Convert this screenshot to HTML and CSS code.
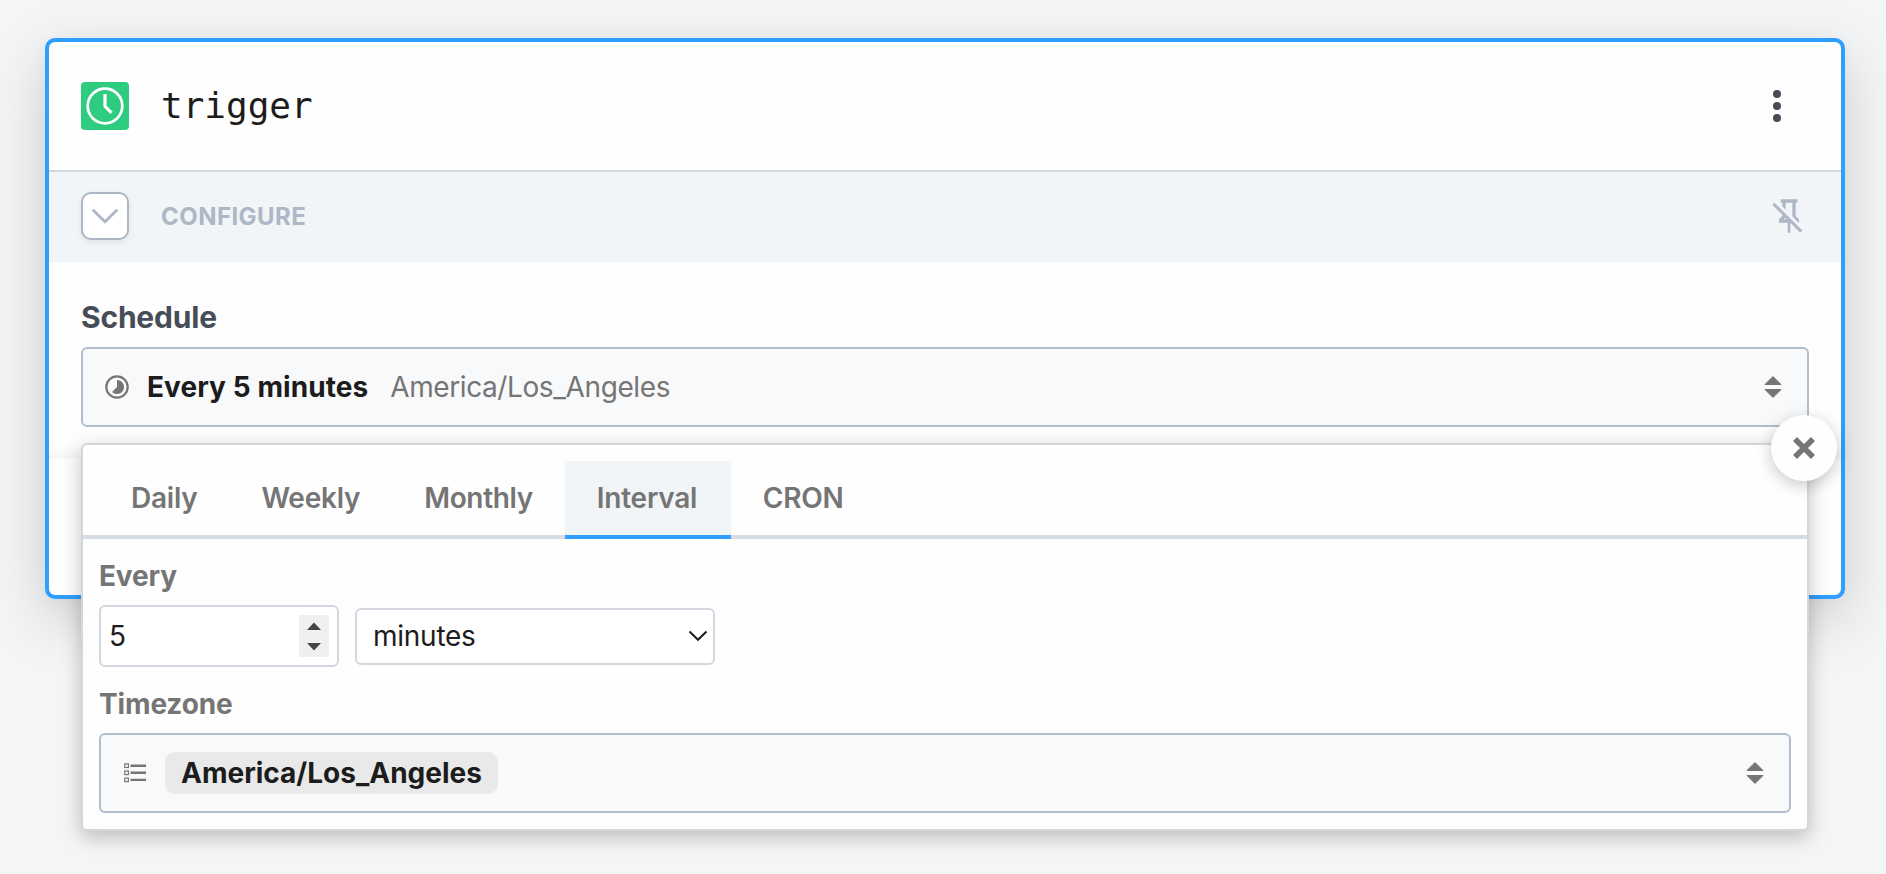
FILE: index.html
```html
<!DOCTYPE html>
<html lang="en">
<head>
<meta charset="utf-8">
<title>trigger</title>
<link rel="stylesheet" href="styles.css">
</head>
<body>
<main class="card">
  <header class="card-header">
    <svg class="clock" viewBox="0 0 48 48"><rect width="48" height="48" rx="4" fill="#2ecc7f"/><circle cx="24" cy="24" r="17.3" fill="none" stroke="#fff" stroke-width="2.7"/><path d="M24 12v12.300l6.600 6.600" fill="none" stroke="#fff" stroke-width="3.200"/></svg>
    <h1 class="title">trigger</h1>
    <svg class="dots" viewBox="0 0 8 32"><circle cx="4" cy="4" r="4"/><circle cx="4" cy="16" r="4"/><circle cx="4" cy="28" r="4"/></svg>
  </header>
  <div class="configure">
    <span class="toggle"><svg width="26" height="15" viewBox="0 0 26 15"><path d="M1.500 1.500L13 12.700 24.500 1.500" fill="none" stroke="#adb7c5" stroke-width="2.800" stroke-linecap="round"/></svg></span>
    <span class="configure-label">CONFIGURE</span>
    <svg class="pin" viewBox="0 0 24 24"><path d="M8,6.2V4H7V2H17V4H16V12L18,14V16H17.8L14,12.2V4H10V8.2L8,6.2M20,20.7L18.7,22L12.8,16.1V22H11.2V16H6V14L8,12V11.3L2,5.3L3.3,4L20,20.7M8.8,14H10.6L9.7,13.1L8.8,14Z"/></svg>
  </div>
  <section class="body">
    <div class="schedule-label"><span>Schedule</span></div>
    <div class="field">
      <svg class="part" viewBox="0 0 24 24"><circle cx="12" cy="12" r="10.700" fill="none" stroke="#757575" stroke-width="2.200"/><path d="M12 5a7 7 0 1 1-4.950 11.950L12 12z" fill="#757575"/></svg>
      <span class="field-value">Every 5 minutes</span>
      <span class="field-zone">America/Los_Angeles</span>
      <svg class="sort" viewBox="0 0 18 24"><path d="M9 1.500l8 8h-16zM9 22.500l8-8h-16z"/></svg>
    </div>
    <div class="popup">
      <nav class="tabs">
        <span class="tab daily">Daily</span><span class="tab weekly">Weekly</span><span class="tab monthly">Monthly</span><span class="tab interval active">Interval</span><span class="tab cron">CRON</span>
      </nav>
      <div class="form">
        <div class="form-label every"><span>Every</span></div>
        <div class="row">
          <div class="number"><span>5</span><svg class="spin" viewBox="0 0 30 42"><path d="M15 7.500l7 7.500H8zM15 35.500l7-7.500H8z" fill="#444"/></svg></div>
          <div class="select"><span>minutes</span><svg width="20" height="12" viewBox="0 0 20 12"><path d="M1.500 1.500L10 9.800l8.500-8.300" fill="none" stroke="#1c1c1c" stroke-width="2"/></svg></div>
        </div>
        <div class="form-label timezone"><span>Timezone</span></div>
        <div class="field zone-field">
          <svg class="list" viewBox="0 0 22 20"><g fill="none" stroke="#757575" stroke-width="1.200"><rect x=".8" y=".9" width="3.600" height="3.600"/><rect x=".8" y="8" width="3.600" height="3.600"/><rect x=".8" y="15.100" width="3.600" height="3.600"/></g><path d="M6.500 2.700H22M6.500 9.800H22M6.500 16.900H22" stroke="#757575" stroke-width="2.400"/></svg>
          <span class="chip"><b>America/Los_Angeles</b></span>
          <svg class="sort" viewBox="0 0 18 24"><path d="M9 1.500l8 8h-16zM9 22.500l8-8h-16z"/></svg>
        </div>
      </div>
      <span class="close"><svg width="22" height="22" viewBox="0 0 22 22"><path d="M2 2l18 18M20 2L2 20" stroke="#757575" stroke-width="5.600"/></svg></span>
    </div>
  </section>
</main>
</body>
</html>
```

FILE: styles.css
```css
* { box-sizing: border-box; }
html { overflow: hidden; }
body { margin: 0; width: 1886px; height: 874px; padding: 38px 41px 0 45px; background: #f4f5f7; font-family: Inter, "Liberation Sans", sans-serif; color: #1c1c1c; font-size: 28px; line-height: 34px; }
svg { display: block; flex: none; }
span { white-space: nowrap; }
.card { width: 1800px; height: 561px; border: 4px solid #2e9fff; border-radius: 10px; background: #fefefe; box-shadow: 0 20px 60px rgba(0,0,0,.17), 0 2px 16px rgba(0,0,0,.03); }
.card-header { height: 130px; padding: 0 60px 0 32px; border-bottom: 2px solid #d3d8dc; display: flex; align-items: center; }
.clock { width: 48px; height: 48px; }
.title { margin: 0 auto 0 32px; font: 400 36px/42px "DejaVu Sans Mono", monospace; }
.dots { width: 8px; height: 32px; fill: #464d57; }
.configure { height: 90px; background: #f2f5f8; padding: 0 32px 2px; display: flex; align-items: center; }
.toggle { width: 48px; height: 48px; border: 2px solid #adb7c5; border-radius: 10px; background: #fff; display: flex; align-items: center; justify-content: center; box-shadow: 0 2px 6px rgba(0,0,0,.08); }
.configure-label { margin: 2px auto 0 32px; font-size: 24px; font-weight: 700; letter-spacing: .45px; color: #adb7c5; }
.pin { width: 40px; height: 40px; fill: #adb7c5; }
.body { height: 197px; padding: 37px 32px 0; background: linear-gradient(to top, rgba(0,0,0,.03), rgba(0,0,0,0) 16px); }
.schedule-label { height: 48px; font-size: 30px; font-weight: 700; line-height: 36px; letter-spacing: -.2px; color: #464d57; }
.field { height: 80px; border: 2px solid #b3bdcd; border-radius: 6px; background: #f8f9fb; display: flex; align-items: center; padding: 0 25px 0 22px; }
.part { width: 24px; height: 24px; }
.field-value { margin-left: 18px; font-weight: 700; letter-spacing: .07px; }
.field-zone { margin-left: 22px; color: #757575; letter-spacing: -.4px; }
.sort { width: 18px; height: 24px; margin-left: auto; fill: #757575; stroke: #757575; stroke-width: 1; stroke-linejoin: round; }
.popup { position: relative; margin-top: 16px; height: 388px; border: 2px solid #d4d6d8; border-radius: 6px; background: #fefefe; box-shadow: 0 6px 20px rgba(0,0,0,.24); }
.tabs { display: flex; height: 94px; padding: 16px 16px 0; border-bottom: 4px solid #d7dbe3; color: #757575; font-weight: 600; letter-spacing: -.25px; }
.tab { height: 78px; padding: 20px 32px 0; }
.monthly { letter-spacing: -.35px; }
.interval { width: 166px; }
.active { background: #f2f5f8; border-bottom: 4px solid #2e9fff; }
.form { padding: 20px 16px 0; }
.form-label { height: 46px; font-weight: 700; letter-spacing: -.15px; color: #757575; }
.row { display: flex; align-items: center; gap: 16px; height: 62px; margin-bottom: 20px; }
.number { width: 240px; height: 62px; border: 2px solid #d3d7df; border-radius: 6px; background: #fff; display: flex; align-items: center; justify-content: space-between; padding: 0 8px; }
.spin { width: 30px; height: 42px; background: #efefef; }
.select { width: 360px; height: 57px; border: 2px solid #d3d7df; border-radius: 6px; background: #fff; display: flex; align-items: center; justify-content: space-between; padding: 0 5px 0 16px; letter-spacing: -.25px; }
.zone-field { padding: 0 25px 0 23px; }
.list { width: 22px; height: 20px; }
.chip { margin-left: 19px; width: 333px; height: 42px; border-radius: 10px; background: #e9e9e9; padding: 4px 0 0 16px; }
.close { position: absolute; right: -30px; top: -30px; width: 66px; height: 66px; border-radius: 50%; background: #fefefe; display: flex; align-items: center; justify-content: center; box-shadow: 0 4px 16px rgba(0,0,0,.22); }
```
